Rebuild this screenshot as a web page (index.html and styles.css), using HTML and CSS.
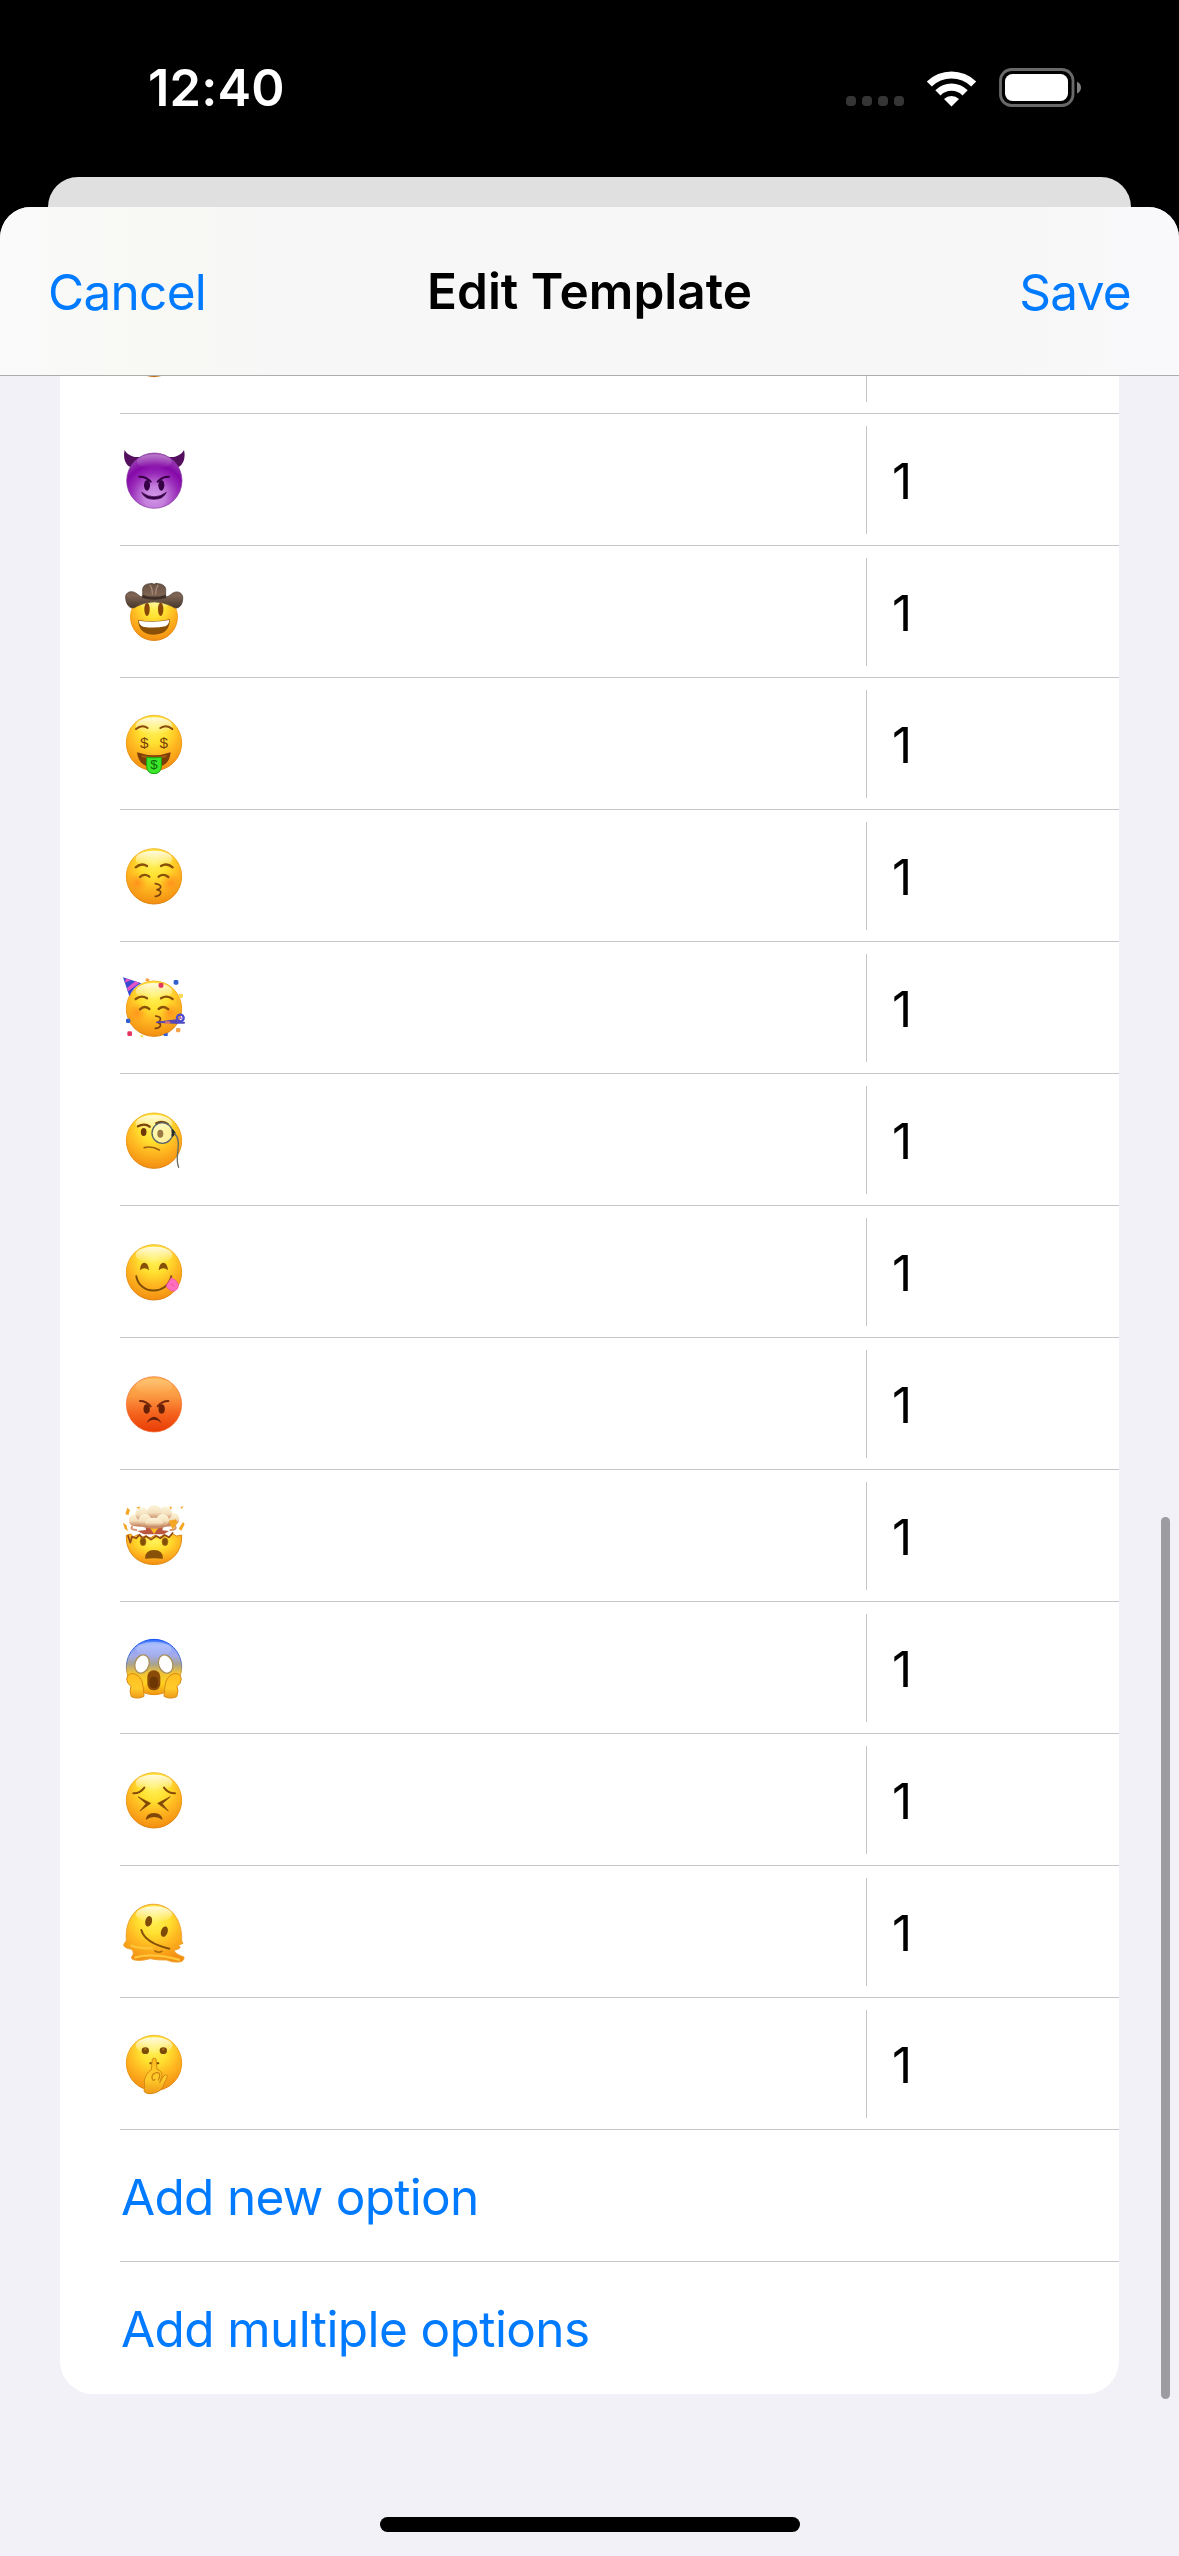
FILE: index.html
```html
<!DOCTYPE html>
<html lang="en">
<head>
<meta charset="utf-8">
<title>Edit Template</title>
<link rel="stylesheet" href="styles.css">
</head>
<body>
<svg class="defs" aria-hidden="true">
  <defs>
    <linearGradient id="rim" x1="0" y1="0" x2="0" y2="1"><stop offset="0" stop-color="#f2bd35"/><stop offset=".5" stop-color="#ef9a18"/><stop offset="1" stop-color="#dc800c"/></linearGradient>
    <radialGradient id="skin" cx=".5" cy=".25" r=".75"><stop offset="0" stop-color="#fff25c"/><stop offset=".35" stop-color="#ffe02f"/><stop offset=".62" stop-color="#ffb921"/><stop offset="1" stop-color="#f38e12"/></radialGradient>
    <linearGradient id="shine" x1="0" y1="0" x2="0" y2="1"><stop offset="0" stop-color="#fff" stop-opacity=".85"/><stop offset="1" stop-color="#fff" stop-opacity="0"/></linearGradient>
    <radialGradient id="cheek"><stop offset="0" stop-color="#ff7a1a" stop-opacity=".6"/><stop offset="1" stop-color="#ff8a1a" stop-opacity="0"/></radialGradient>
    <radialGradient id="devil" cx=".5" cy=".8" r=".85"><stop offset="0" stop-color="#d596ea"/><stop offset=".22" stop-color="#c480dc"/><stop offset=".5" stop-color="#9a2cba"/><stop offset=".68" stop-color="#8508a8"/><stop offset="1" stop-color="#a55cba"/></radialGradient>
    <linearGradient id="anger" x1="0" y1="0" x2="0" y2="1"><stop offset="0" stop-color="#ffb74f"/><stop offset=".35" stop-color="#fb9a42"/><stop offset=".65" stop-color="#f5651f"/><stop offset="1" stop-color="#e83c05"/></linearGradient>
    <linearGradient id="fear" x1="0" y1="0" x2="0" y2="1"><stop offset="0" stop-color="#2d6dff"/><stop offset=".12" stop-color="#8aa2fb"/><stop offset=".3" stop-color="#a3abe8"/><stop offset=".45" stop-color="#a9a28f"/><stop offset=".6" stop-color="#efc236"/><stop offset=".8" stop-color="#ffd11f"/><stop offset="1" stop-color="#ef9512"/></linearGradient>
    <linearGradient id="fearrim" x1="0" y1="0" x2="0" y2="1"><stop offset="0" stop-color="#1254f5"/><stop offset=".4" stop-color="#5376c9"/><stop offset=".6" stop-color="#d19a2c"/><stop offset="1" stop-color="#e78b0c"/></linearGradient>
    <linearGradient id="hat" x1="0" y1="0" x2="0" y2="1"><stop offset="0" stop-color="#6b5344"/><stop offset=".5" stop-color="#7d6453"/><stop offset="1" stop-color="#46362c"/></linearGradient>
    <linearGradient id="hand" x1="0" y1="0" x2="0" y2="1"><stop offset="0" stop-color="#ffbd1f"/><stop offset=".6" stop-color="#ffcb2b"/><stop offset="1" stop-color="#f09a18"/></linearGradient>
    <linearGradient id="cloud" x1="0" y1="0" x2="0" y2="1"><stop offset="0" stop-color="#fdf6dc"/><stop offset=".55" stop-color="#f3dfbb"/><stop offset="1" stop-color="#c58660"/></linearGradient>
    <g id="face">
      <circle r="83" fill="url(#skin)" stroke="url(#rim)" stroke-width="3"/>
      <ellipse cy="-52" rx="55" ry="25" fill="url(#shine)"/>
    </g>
  </defs>
</svg>

<header class="status">
  <span class="clock">12:40</span>
  <div class="status-icons">
    <div class="signal"><i></i><i></i><i></i><i></i></div>
    <svg class="wifi" viewBox="0 0 51 38" aria-label="Wi-Fi">
      <path d="M0.8 12.6A35 35 0 0 1 50.2 12.6L45.2 17.6A28 28 0 0 0 5.8 17.6Z"/>
      <path d="M9.3 21.2A23 23 0 0 1 41.7 21.2L36.5 26.4A15.600 15.600 0 0 0 14.500 26.400Z"/>
      <path d="M18 30A10.800 10.800 0 0 1 33 30L25.500 37.500Z"/>
    </svg>
    <svg class="battery" viewBox="0 0 83 39" aria-label="Battery">
      <rect x="1.500" y="1.500" width="72.500" height="36" rx="11" fill="none" stroke="#696969" stroke-width="2.800"/>
      <rect x="6" y="6" width="63" height="27" rx="7.500" fill="#fff"/>
      <path d="M78 13.500Q82 15.500 82 19.500T78 25.500Z" fill="#808080"/>
    </svg>
  </div>
</header>
<div class="back-sheet"></div>

<main class="sheet">
  <nav class="bar">
    <a class="action cancel">Cancel</a>
    <h1 class="title">Edit Template</h1>
    <a class="action save">Save</a>
  </nav>
  <section class="list">
    <div class="row peek"><div class="name"><svg class="sliver" viewBox="0 0 24 3"><path d="M1 0H23Q12 3.500 1 0Z" fill="#c8741c"/></svg></div><div class="weight"></div></div>

    <div class="row"><div class="name"><svg class="emoji" viewBox="0 15 270 270" aria-label="Smiling face with horns">
      <path d="M44 60C38 84 47 106 62 112L94 80C74 84 54 78 44 60ZM222 60C228 84 219 106 204 112L172 80C192 84 212 78 222 60Z" fill="#54105f"/>
      <circle cx="133" cy="152" r="83" fill="url(#devil)" stroke="#81369c" stroke-width="2"/>
      <ellipse cx="133" cy="95" rx="52" ry="22" fill="url(#shine)" opacity=".35"/>
      <ellipse cx="111" cy="166" rx="9" ry="16" fill="#350044"/><ellipse cx="154" cy="166" rx="9" ry="16" fill="#350044"/>
      <path d="M88 140Q108 139 122 155M177 140Q157 139 143 155" class="ink" stroke="#350044" stroke-width="6"/>
      <path d="M95 187Q132 214 169 187Q160 208 132 208T95 187Z" fill="#350044" stroke="#350044" stroke-width="2" stroke-linejoin="round"/>
    </svg></div><div class="weight">1</div></div>

    <div class="row"><div class="name"><svg class="emoji" viewBox="0 411 270 270" aria-label="Cowboy hat face">
      <use href="#face" transform="translate(132 561) scale(.85)"/>
      <path d="M47 505C44 484 68 478 84 494Q91 501 98 501L98 476Q101 462 119 461Q126 458 132 463Q138 458 146 461Q164 463 167 476L167 501Q174 501 182 494C198 478 222 486 218 509C216 531 200 541 186 529Q132 502 80 529C66 541 49 530 47 505Z" fill="url(#hat)" stroke="#44352c" stroke-width="2"/>
      <path d="M120 466Q127 474 127 492M144 466Q138 474 137 492" class="ink" stroke="#a98a75" stroke-width="4"/>
      <path d="M98 494Q132 507 167 494L168 504Q132 515 97 504Z" fill="#3e2f28"/>
      <ellipse cx="111" cy="538" rx="8" ry="20" fill="#884709"/><ellipse cx="152" cy="538" rx="8" ry="20" fill="#884709"/>
      <path d="M84 570Q132 578 180 568Q178 614 132 614T84 570Z" fill="#8b5008"/>
      <path d="M86 572Q132 579 178 570Q177 584 166 589Q132 596 99 590Q88 585 86 572Z" fill="#fff"/>
    </svg></div><div class="weight">1</div></div>

    <div class="row"><div class="name"><svg class="emoji" viewBox="0 -3 270 270" aria-label="Money-mouth face">
      <use href="#face" x="132" y="129"/>
      <path d="M78 87Q96 72 113 84M151 84Q170 72 187 87" class="ink" stroke="#8a4b0b" stroke-width="6"/>
      <text x="103" y="143" class="dollar">$</text><text x="161" y="143" class="dollar">$</text>
      <path d="M81 157Q132 175 182 157Q178 202 132 202T81 157Z" fill="#7c3e09"/>
      <path d="M94 165Q132 176 170 165L169 172Q132 179 96 172Z" fill="#a65c0d"/>
      <path d="M110 172Q132 175 154 172V200Q152 221 132 221T110 200Z" fill="#3be62b" stroke="#19a60f" stroke-width="3"/>
      <text x="132" y="208" class="dollar dark">$</text>
    </svg></div><div class="weight">1</div></div>

    <div class="row"><div class="name"><svg class="emoji" viewBox="0 393 270 270" aria-label="Kissing face with closed eyes">
      <use href="#face" x="132" y="529"/>
      <circle cx="82" cy="548" r="30" fill="url(#cheek)"/><circle cx="182" cy="548" r="30" fill="url(#cheek)"/>
      <path d="M77 502Q94 487 111 498M153 498Q171 487 188 502M90 531Q103 519 118 530M146 530Q160 519 175 531" class="ink" stroke="#885008" stroke-width="7"/>
      <path d="M136 551Q154 554 152 562Q150 568 141 569Q154 572 152 579Q150 588 136 589" class="ink" stroke="#79430b" stroke-width="5"/>
    </svg></div><div class="weight">1</div></div>

    <div class="row"><div class="name"><svg class="emoji" viewBox="0 9 270 270" aria-label="Partying face">
      <use href="#face" x="132" y="146"/>
      <circle cx="82" cy="158" r="30" fill="url(#cheek)"/><circle cx="180" cy="158" r="28" fill="url(#cheek)"/>
      <path d="M39 52L94 70Q70 82 58 109Z" fill="#394bd0"/>
      <path d="M48 56L44 68L64 60ZM76 64L51 84L54 94L88 69Z" fill="#e653c9"/>
      <path d="M77 117Q94 104 111 115M153 115Q171 104 188 117M90 148Q103 135 118 147M146 147Q160 135 175 148" class="ink" stroke="#885008" stroke-width="7"/>
      <path d="M137 168Q153 170 151 178T142 187Q153 190 151 197T136 205" class="ink" stroke="#79430b" stroke-width="5"/>
      <path d="M139 187L201 179V190Z" fill="#5946b8" stroke="#5946b8" stroke-width="3"/><path d="M166 184h14v7h-14z" fill="#e77a66"/>
      <circle cx="211" cy="174" r="10" fill="none" stroke="#4d4bd0" stroke-width="7"/><circle cx="211" cy="174" r="4" fill="#a569d2"/>
      <path d="M202 188H222" class="ink" stroke="#4f4bc4" stroke-width="6"/>
      <g fill="#e3365f"><rect x="146" y="69" width="14" height="14" rx="4"/><rect x="52" y="214" width="14" height="14" rx="4"/></g>
      <g fill="#315fd1"><rect x="191" y="60" width="14" height="14" rx="4"/><rect x="48" y="176" width="13" height="13" rx="4"/><path d="M160 223L173 218V228H162Z"/></g>
      <g fill="#f8db57"><rect x="206" y="101" width="13" height="13" rx="4"/><path d="M89 224L102 227L96 234Z"/></g>
      <g fill="#f5a34d"><rect x="198" y="204" width="13" height="13" rx="4"/><path d="M105 62L110 54L119 58L116 65Z"/></g>
    </svg></div><div class="weight">1</div></div>

    <div class="row"><div class="name"><svg class="emoji" viewBox="0 405 270 270" aria-label="Face with monocle">
      <use href="#face" x="132" y="542"/>
      <path d="M84 499Q104 488 119 500M139 490Q155 481 173 492" class="ink" stroke="#7b4306" stroke-width="7"/>
      <ellipse cx="101" cy="516" rx="8.500" ry="12" fill="#6e3909"/>
      <path d="M103 563Q126 557 148 570" class="ink" stroke="#996014" stroke-width="5"/>
      <circle cx="157" cy="519" r="31" fill="#fffbd2" fill-opacity=".7" stroke="#596569" stroke-width="4"/>
      <ellipse cx="151" cy="521" rx="9" ry="12" fill="#9b7a45"/>
      <path d="M188 511L194 519L188 527Z" class="ink" stroke="#252b2c" stroke-width="6"/>
      <path d="M193 520C220 545 191 590 206 622" class="ink" stroke="#6a6b64" stroke-width="4"/>
    </svg></div><div class="weight">1</div></div>

    <div class="row"><div class="name"><svg class="emoji" viewBox="0 6 270 270" aria-label="Face savoring food">
      <use href="#face" x="132" y="142"/>
      <path d="M90 136Q91 113 103 113T117 136Q103 123 90 136ZM146 136Q148 113 160 113T174 136Q160 123 146 136Z" fill="#875007"/>
      <path d="M79 154C88 208 170 214 184 154" class="ink" stroke="#7e4d08" stroke-width="6"/>
      <path d="M184 158Q199 164 205 177Q207 196 188 199Q174 195 168 183Z" fill="#ff6fbd" stroke="#ef4ba2" stroke-width="2"/>
      <path d="M185 177L192 183" class="ink" stroke="#e44a9d" stroke-width="3"/>
    </svg></div><div class="weight">1</div></div>

    <div class="row"><div class="name"><svg class="emoji" viewBox="0 402 270 270" aria-label="Enraged face">
      <circle cx="132" cy="538" r="83" fill="url(#anger)" stroke="#ee692a" stroke-width="2"/>
      <ellipse cx="132" cy="485" rx="55" ry="24" fill="url(#shine)" opacity=".25"/>
      <ellipse cx="110" cy="552" rx="9.500" ry="14" fill="#672006"/><ellipse cx="155" cy="552" rx="9.500" ry="14" fill="#672006"/>
      <path d="M90 528Q109 528 122 544M175 528Q156 528 143 544" class="ink" stroke="#74260a" stroke-width="6"/>
      <path d="M109 594Q132 557 155 594Q132 575 109 594Z" fill="#672006"/>
    </svg></div><div class="weight">1</div></div>

    <div class="row"><div class="name"><svg class="emoji" viewBox="0 3 270 270" aria-label="Exploding head">
      <path d="M49 136L62 132L70 141L83 134L94 143L108 137L120 144L135 136L148 142L163 134L176 142L188 132L200 138L215 135C220 252 45 254 49 136Z" fill="url(#skin)" stroke="#e08a10" stroke-width="3"/>
      <path d="M54 137L61 158L66 140L79 145L88 134L99 145L109 139L123 149L139 138L151 145L164 135L177 142L188 129" class="ink" stroke="#914716" stroke-width="5"/>
      <path d="M106 107H160L157 121L177 123L161 133H102L82 123L108 120Z" fill="#bb563e"/><path d="M119 111L132 132L147 111Z" fill="#ffbd24"/>
      <path d="M79 120Q60 119 66 110M181 120Q202 120 195 108" class="ink" stroke="#d99872" stroke-width="6"/>
      <path d="M58 96Q62 112 96 110Q132 122 168 110Q202 110 207 92Z" fill="#c98b68"/>
      <g fill="url(#cloud)"><circle cx="75" cy="90" r="18"/><circle cx="190" cy="86" r="18"/><circle cx="96" cy="72" r="20"/><circle cx="166" cy="69" r="20"/><circle cx="133" cy="66" r="21"/><circle cx="105" cy="91" r="19"/><circle cx="158" cy="91" r="19"/><ellipse cx="132" cy="97" rx="27" ry="14"/></g>
      <g fill="#f4a624"><path d="M46 72L52 53L60 60L55 76ZM78 53L91 49L87 56ZM178 48L187 53L181 58ZM211 51L221 49L215 57ZM39 98L49 105L54 124L44 116ZM176 93L198 88L202 100L188 119ZM206 116L219 96L224 103L214 122Z"/></g>
      <ellipse cx="99" cy="155" rx="9" ry="12" fill="#83500a" stroke="#b87813" stroke-width="2"/><ellipse cx="165" cy="155" rx="9" ry="12" fill="#83500a" stroke="#b87813" stroke-width="2"/>
      <path d="M105 206Q105 180 132 180T159 206Q132 203 105 206Z" fill="#895009"/>
    </svg></div><div class="weight">1</div></div>

    <div class="row"><div class="name"><svg class="emoji" viewBox="0 399 270 270" aria-label="Face screaming in fear">
      <circle cx="132" cy="531" r="83" fill="url(#fear)" stroke="url(#fearrim)" stroke-width="3"/>
      <ellipse cx="132" cy="478" rx="53" ry="22" fill="url(#shine)" opacity=".5"/>
      <ellipse cx="96" cy="522" rx="21" ry="28" transform="rotate(19 96 522)" fill="#fff" stroke="#a78e58" stroke-width="4"/><ellipse cx="167" cy="522" rx="21" ry="28" transform="rotate(-19 167 522)" fill="#fff" stroke="#a78e58" stroke-width="4"/>
      <rect x="112" y="541" width="39" height="60" rx="19" fill="#8a4b08"/><rect x="119" y="560" width="25" height="35" rx="12" fill="#6d3704"/>
      <path d="M50 566Q54 548 72 551Q90 557 97 576Q101 598 102 619Q84 629 64 620Q57 604 63 589Q51 582 50 566ZM214 566Q210 548 192 551Q174 557 167 576Q163 598 162 619Q180 629 200 620Q207 604 201 589Q213 582 214 566Z" fill="url(#hand)" stroke="#d98a13" stroke-width="3"/>
    </svg></div><div class="weight">1</div></div>

    <div class="row"><div class="name"><svg class="emoji" viewBox="0 0 270 270" aria-label="Persevering face">
      <use href="#face" x="132" y="136"/>
      <path d="M70 115Q90 116 103 98M162 98Q175 116 195 115" class="ink" stroke="#854b07" stroke-width="6"/>
      <path d="M84 125L122 145L90 168L108 146ZM181 125L143 145L175 168L157 146Z" fill="#814708" stroke="#814708" stroke-width="2" stroke-linejoin="round"/>
      <path d="M107 195Q109 174 132 174T158 195Q132 177 107 195Z" fill="#814708"/>
    </svg></div><div class="weight">1</div></div>

    <div class="row"><div class="name"><svg class="emoji" viewBox="0 396 270 270" aria-label="Melting face">
      <path d="M49 558C38 412 220 410 215 558L219 565L205 571Q216 577 205 582L192 586Q197 598 222 606Q223 620 207 621Q185 623 170 615Q143 616 120 611Q91 619 75 615Q63 614 65 605Q75 596 65 583Q42 579 41 570Q43 562 49 558Z" fill="url(#skin)" stroke="#efa534" stroke-width="3"/>
      <ellipse cx="132" cy="478" rx="54" ry="24" fill="url(#shine)"/>
      <path d="M64 572Q90 581 126 580M76 607Q127 592 207 614" class="ink" stroke="#ffc538" stroke-width="7"/>
      <ellipse cx="116" cy="499" rx="10" ry="16" transform="rotate(14 116 499)" fill="#7e4a07"/><ellipse cx="163" cy="530" rx="10" ry="16" transform="rotate(18 163 530)" fill="#7e4a07"/>
      <path d="M94 525Q105 564 178 581" class="ink" stroke="#81500a" stroke-width="6"/>
      <path d="M135 588Q146 595 156 589" class="ink" stroke="#ac6b0c" stroke-width="5"/>
    </svg></div><div class="weight">1</div></div>

    <div class="row"><div class="name"><svg class="emoji" viewBox="0 -3 270 270" aria-label="Shushing face">
      <use href="#face" x="132" y="129"/>
      <ellipse cx="106" cy="92" rx="11" ry="10" fill="#7b4a09"/><ellipse cx="160" cy="92" rx="11" ry="10" fill="#7b4a09"/><circle cx="106" cy="88" r="3" fill="#b77b1b"/><circle cx="160" cy="88" r="3" fill="#b77b1b"/>
      <path d="M121 130H145" class="ink" stroke="#7f4a09" stroke-width="6"/>
      <path d="M127 117Q133 111 138 117L141 148Q155 151 156 166L149 188L161 168Q168 160 173 168L158 202Q148 218 123 221Q107 222 102 214Q106 201 103 184Q106 160 124 149Z" fill="url(#hand)" stroke="#d58912" stroke-width="3"/>
      <path d="M145 180Q155 159 142 157Q124 161 126 174Q129 186 135 178" class="ink" stroke="#cd850f" stroke-width="4"/>
    </svg></div><div class="weight">1</div></div>

    <a class="row link add-one">Add new option</a>
    <a class="row link add-many">Add multiple options</a>
  </section>
  <div class="scroll-thumb"></div>
  <div class="home"></div>
</main>
</body>
</html>
```
FILE: styles.css
```css
* { box-sizing: border-box; }
body {
  margin: 0;
  width: 1179px;
  height: 2556px;
  display: flex;
  flex-direction: column;
  overflow: hidden;
  position: relative;
  background: #000;
  color: #000;
  font-family: Inter, "Liberation Sans", sans-serif;
  font-size: 49.5px;
  line-height: 60px;
}
.defs { position: absolute; width: 0; height: 0; }

.status {
  height: 177px;
  flex: none;
  display: flex;
  justify-content: space-between;
  align-items: flex-start;
  padding: 58px 97px 0 148px;
}
.clock { color: #fff; font-weight: 600; font-size: 50.5px; letter-spacing: .2px; }
.status-icons { display: flex; align-items: flex-start; padding-top: 10px; }
.signal { display: flex; gap: 6px; margin: 28px 22px 0 0; }
.signal i { width: 10px; height: 10px; border-radius: 4px; background: #353535; }
.wifi { width: 51px; height: 38px; margin: 1px 22px 0 0; fill: #fff; }
.battery { width: 83px; height: 39px; }

.back-sheet {
  flex: none;
  height: 30px;
  margin: 0 48px;
  border-radius: 30px 30px 0 0;
  background: #e0e0e0;
}
.sheet {
  flex: 1;
  min-height: 0;
  display: flex;
  flex-direction: column;
  border-radius: 31px 31px 0 0;
  overflow: hidden;
  background: #f2f1f7;
}
.bar {
  flex: none;
  height: 169px;
  display: grid;
  grid-template-columns: 1fr auto 1fr;
  align-items: start;
  padding: 54px 48px 0;
  border-bottom: 1px solid #adadad;
  background: linear-gradient(90deg, #fafafb 0, #f9f9f8 60px, #f8f8f4 155px, #f7f7f7 270px, #f7f7f7 1020px, #f9f9fb 1150px);
}
.action, .link { color: #007aff; }
.action { padding-top: 1px; letter-spacing: -.7px; }
.save { text-align: right; }
.title { margin: 0; font-size: inherit; line-height: inherit; font-weight: 600; }

.list {
  flex: none;
  margin: 0 60px;
  padding-left: 60px;
  border-radius: 0 0 33px 33px;
  background: #fff;
}
.row {
  height: 132px;
  display: flex;
  border-bottom: 1px solid #c6c6c8;
}
.row:last-child { border-bottom: 0; }
.name { width: 746px; display: flex; align-items: center; }
.emoji { width: 90px; height: 90px; margin-left: -10px; }
.weight {
  flex: 1;
  margin: 12px 0 11px;
  padding: 25px 0 0 25px;
  border-left: 1px solid #c6c6c8;
}
.peek { height: 38px; }
.peek .name { align-items: flex-start; }
.peek .weight { margin-top: 0; }
.sliver { width: 24px; height: 2px; margin-left: 22px; }
.link { padding: 37px 0 0 1px; letter-spacing: -.7px; }
.add-many { letter-spacing: -.6px; }
.ink { fill: none; stroke-linecap: round; stroke-linejoin: round; }
.dollar { font: 46px "Liberation Sans", sans-serif; text-anchor: middle; fill: #7b4206; }
.dollar.dark { font-size: 40px; fill: #0c6908; }

.scroll-thumb {
  position: absolute;
  left: 1161px;
  top: 1517px;
  width: 9px;
  height: 882px;
  border-radius: 5px;
  background: #9d9ca1;
}
.home {
  width: 420px;
  height: 15px;
  margin: auto auto 24px;
  border-radius: 8px;
  background: #000;
}
```
